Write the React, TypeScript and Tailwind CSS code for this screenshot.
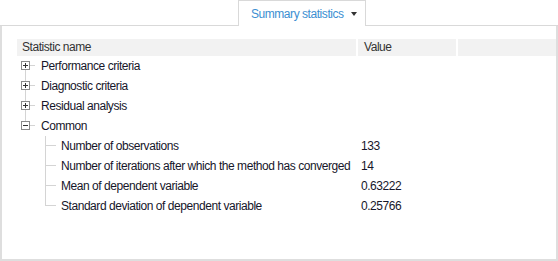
import React from "react";

type Row = { label: string; value?: string };

const groups: { label: string; open: boolean; children?: Row[] }[] = [
    { label: "Performance criteria", open: false },
    { label: "Diagnostic criteria", open: false },
    { label: "Residual analysis", open: false },
    {
        label: "Common",
        open: true,
        children: [
            { label: "Number of observations", value: "133" },
            { label: "Number of iterations after which the method has converged", value: "14" },
            { label: "Mean of dependent variable", value: "0.63222" },
            { label: "Standard deviation of dependent variable", value: "0.25766" },
        ],
    },
];

const LINE = "#d4d4d4";

function ExpandBox({ open, first, last }: { open: boolean; first: boolean; last: boolean }) {
    return (
        <svg width="24" height="20" className="shrink-0">
            {!first && <line x1="8.5" y1="0" x2="8.5" y2="5" stroke={LINE} />}
            {!last && <line x1="8.5" y1="14" x2="8.5" y2="20" stroke={LINE} />}
            <rect x="4.5" y="5.5" width="8" height="8" fill="#fff" stroke="#8a8a8a" />
            <line x1="6" y1="9.5" x2="11" y2="9.5" stroke="#333" />
            {!open && <line x1="8.5" y1="7" x2="8.5" y2="12" stroke="#333" />}
            <line x1="13" y1="9.5" x2="18" y2="9.5" stroke={LINE} />
        </svg>
    );
}

function ChildLines({ last }: { last: boolean }) {
    return (
        <svg width="44" height="20" className="shrink-0">
            <line x1="28.5" y1="0" x2="28.5" y2={last ? 10 : 20} stroke={LINE} />
            <line x1="28" y1="9.5" x2="39" y2="9.5" stroke={LINE} />
        </svg>
    );
}

export default function App() {
    return (
        <div
            className="w-[558px] h-[261px] bg-white flex flex-col text-[12px] tracking-[-0.45px] text-[#16162a]"
            style={{ fontFamily: '"Liberation Sans", Arial, sans-serif' }}
        >
            {/* tab strip */}
            <div className="flex h-[26px] shrink-0">
                <div className="w-[238px] border-b border-[#d9d9d9]" />
                <div className="w-[128px] border border-b-0 border-[#d9d9d9] flex items-center pl-[12px] pr-[8px] bg-white">
                    <span className="text-[#3c8fd2] whitespace-nowrap">Summary statistics</span>
                    <span className="ml-auto w-0 h-0 border-l-[3.5px] border-r-[3.5px] border-t-[4px] border-l-transparent border-r-transparent border-t-[#333]" />
                </div>
                <div className="flex-1 border-b border-[#d9d9d9]" />
            </div>

            {/* panel */}
            <div className="flex-1 border-x-2 border-b-2 border-[#dedede] pt-[13px] pl-[15px]">
                <div className="flex h-[17px] bg-[#f2f2f2] text-[#333] leading-[17px]">
                    <div className="w-[339px] pl-[5px]">Statistic name</div>
                    <div className="w-[100px] pl-[6px] border-l-2 border-white">Value</div>
                    <div className="flex-1 border-l-2 border-white" />
                </div>

                {groups.map((g, i) => (
                    <React.Fragment key={g.label}>
                        <div className="flex h-5 items-center">
                            <ExpandBox open={g.open} first={i === 0} last={i === groups.length - 1} />
                            <span>{g.label}</span>
                        </div>
                        {g.open &&
                            g.children?.map((c, j) => (
                                <div key={c.label} className="flex h-5 items-center">
                                    <div className="w-[341px] flex items-center shrink-0">
                                        <ChildLines last={j === (g.children?.length ?? 0) - 1} />
                                        <span className="whitespace-nowrap">{c.label}</span>
                                    </div>
                                    <span className="pl-[3px]">{c.value}</span>
                                </div>
                            ))}
                    </React.Fragment>
                ))}
            </div>
        </div>
    );
}
